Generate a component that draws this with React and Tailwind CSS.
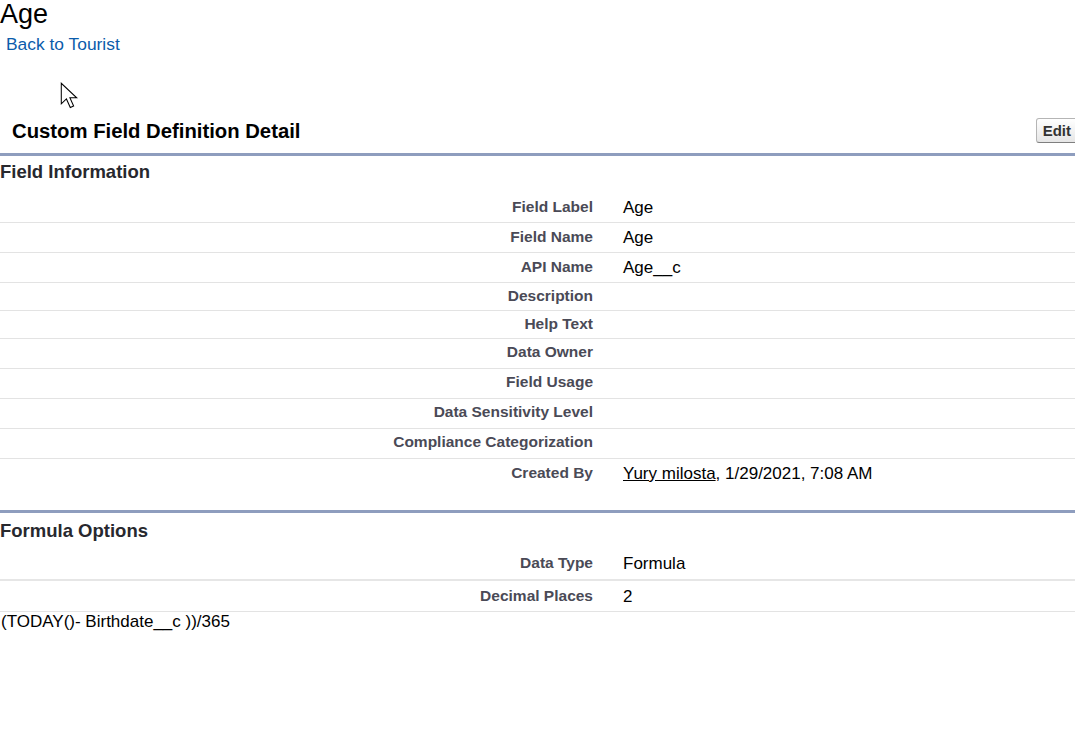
import React from "react";

const fieldRows = [
  { label: "Field Label", value: "Age", h: "h-[30px]", pt: "pt-[5px]" },
  { label: "Field Name", value: "Age", h: "h-[30px]", pt: "pt-[5px]" },
  { label: "API Name", value: "Age__c", h: "h-[30px]", pt: "pt-[5px]" },
  { label: "Description", value: "", h: "h-[28px]", pt: "pt-[4px]" },
  { label: "Help Text", value: "", h: "h-[28px]", pt: "pt-[4px]" },
  { label: "Data Owner", value: "", h: "h-[30px]", pt: "pt-[4px]" },
  { label: "Field Usage", value: "", h: "h-[30px]", pt: "pt-[4px]" },
  { label: "Data Sensitivity Level", value: "", h: "h-[30px]", pt: "pt-[4px]" },
  { label: "Compliance Categorization", value: "", h: "h-[30px]", pt: "pt-[4px]" },
];

function Row({ label, children, className, pt }) {
  return (
    <div className={`grid grid-cols-[593px_1fr] ${className}`}>
      <div className={`${pt} text-right text-[15.5px] leading-[18px] font-bold text-[#4a4a56]`}>
        {label}
      </div>
      <div className={`${pt} pl-[30px] text-[17px] leading-[20px] text-black`}>{children}</div>
    </div>
  );
}

function Cursor() {
  return (
    <svg
      className="absolute left-[60px] top-[82px]"
      width="18"
      height="27"
      viewBox="0 0 14 21"
    >
      <path
        d="M1 1 V17 L5 13.2 L8 19.8 L10.6 18.7 L7.7 12.3 H13 Z"
        fill="#fff"
        stroke="#000"
        strokeWidth="0.8"
        strokeLinejoin="miter"
      />
    </svg>
  );
}

export default function App() {
  return (
    <div className="relative w-full min-h-[751px] overflow-hidden bg-white font-['Liberation_Sans',Arial,sans-serif]">
      <Cursor />
      <div className="text-[27px] leading-[28px] text-black">Age</div>
      <div className="mt-[6px] ml-[6px] text-[17.4px] leading-[20px]">
        <a className="text-[#0b5cab]">Back to Tourist</a>
      </div>

      <div className="mt-[63px] h-[28px] flex justify-between items-start">
        <h2 className="mt-[2px] pl-[12px] text-[20.3px] leading-[24px] font-bold text-black">
          Custom Field Definition Detail
        </h2>
        <button className="mt-[1px] -mr-[3px] h-[25px] px-[6px] rounded-[3px] border border-[#b5b5b5] border-b-[#7f7f7f] bg-gradient-to-b from-white to-[#e6e6e6] text-[15px] leading-[20px] font-bold text-[#333]">
          Edit
        </button>
      </div>

      <div className="mt-[8px] h-[3px] bg-[#8e9dbe]" />
      <h3 className="pt-[5px] pb-[10px] text-[18.5px] leading-[22px] font-bold text-[#27282e]">
        Field Information
      </h3>
      <div>
        {fieldRows.map((r) => (
          <Row
            key={r.label}
            label={r.label}
            pt={r.pt}
            className={`${r.h} border-b border-[#e3e3e3]`}
          >
            {r.value}
          </Row>
        ))}
        <Row label="Created By" pt="pt-[5px]" className="h-[30px]">
          <a className="underline text-black">Yury milosta</a>, 1/29/2021, 7:08 AM
        </Row>
      </div>
      <div className="h-[21px]" />

      <div className="h-[3px] bg-[#8e9dbe]" />
      <h3 className="pt-[7px] pb-[7px] text-[18.5px] leading-[22px] font-bold text-[#27282e]">
        Formula Options
      </h3>
      <Row label="Data Type" pt="pt-[5px]" className="h-[32px] border-b-2 border-[#e6e6e6]">
        Formula
      </Row>
      <Row label="Decimal Places" pt="pt-[6px]" className="h-[31px] border-b border-[#e3e3e3]">
        2
      </Row>
      <div className="pl-[1px] text-[17px] leading-[20px] text-black">
        (TODAY()- Birthdate__c ))/365
      </div>
    </div>
  );
}
